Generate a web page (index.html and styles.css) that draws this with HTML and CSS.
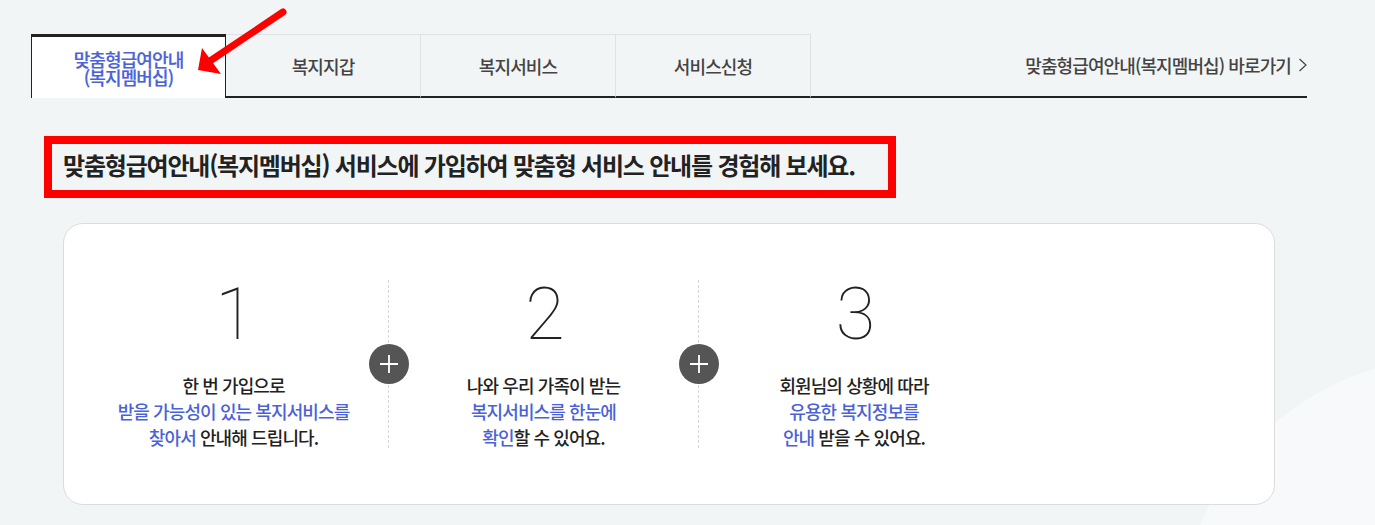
FILE: index.html
```html
<!DOCTYPE html>
<html lang="ko">
<head>
    <meta charset="utf-8">
    <link rel="stylesheet" href="styles.css">
</head>
<body>
    <svg class="red-arrow" width="100" height="80" viewBox="0 0 100 80">
        <path d="M93 12 L20 61" stroke="#f00" stroke-width="7" stroke-linecap="round" fill="none"/>
        <polygon points="8,70 12,48 31,74" fill="#f00"/>
    </svg>
    <div class="tab-bar">
        <a class="tab active">맞춤형급여안내<br>(복지멤버십)</a>
        <a class="tab">복지지갑</a>
        <a class="tab">복지서비스</a>
        <a class="tab">서비스신청</a>
        <a class="shortcut">맞춤형급여안내(복지멤버십) 바로가기
            <svg width="8" height="14" viewBox="0 0 8 14"><path d="M0.5 1 L7 7 L0.5 13" stroke="#444" stroke-width="1.2" fill="none"/></svg>
        </a>
    </div>
    <h2 class="headline">맞춤형급여안내(복지멤버십) 서비스에 가입하여 맞춤형 서비스 안내를 경험해 보세요.</h2>
    <div class="card">
        <div class="step">
            <div class="num">1</div>
            <p>한 번 가입으로<br><span class="blue">받을 가능성이 있는 복지서비스를</span><br><span class="blue">찾아서</span> 안내해 드립니다.</p>
            <div class="plus"><svg width="18" height="18" viewBox="0 0 18 18"><path d="M9 0 V18 M0 9 H18" stroke="#fff" stroke-width="1.8"/></svg></div>
        </div>
        <div class="step">
            <div class="num">2</div>
            <p>나와 우리 가족이 받는<br><span class="blue">복지서비스를 한눈에</span><br><span class="blue">확인</span>할 수 있어요.</p>
            <div class="plus"><svg width="18" height="18" viewBox="0 0 18 18"><path d="M9 0 V18 M0 9 H18" stroke="#fff" stroke-width="1.8"/></svg></div>
        </div>
        <div class="step last">
            <div class="num">3</div>
            <p>회원님의 상황에 따라<br><span class="blue">유용한 복지정보를</span><br><span class="blue">안내</span> 받을 수 있어요.</p>
        </div>
    </div>
</body>
</html>
```

FILE: styles.css
```css
html, body {
    margin: 0;
    height: 525px;
    overflow: hidden;
}
body {
    position: relative;
    background: radial-gradient(circle 279px at 1456px 635px, #f7f9fb 99.7%, #f2f5f6 100%) #f2f5f6;
    font-family: "Noto Sans CJK KR", "Noto Sans", sans-serif;
    color: #222;
    padding: 34px 68px 0 31px;
    box-sizing: border-box;
}
.red-arrow {
    position: absolute;
    left: 190px;
    top: 0;
    z-index: 2;
}
.tab-bar {
    position: relative;
    display: flex;
    height: 64px;
    border-bottom: 2px solid #222;
    box-sizing: border-box;
}
.tab {
    width: 195px;
    height: 64px;
    box-sizing: border-box;
    display: flex;
    align-items: center;
    justify-content: center;
    text-align: center;
    font-size: 18px;
    font-weight: 500;
    line-height: 18px;
    letter-spacing: -0.9px;
    color: #444;
    border: 1px solid #dfe1e4;
    border-left: 0;
    border-bottom: 2px solid #222;
}
.tab.active {
    color: #4a62d8;
    -webkit-text-stroke: 0.2px #4a62d8;
    background-color: #fff;
    border: 1px solid #222;
    border-top: 3px solid #222;
    border-bottom: 0;
}
.shortcut {
    margin-left: auto;
    display: flex;
    align-items: center;
    gap: 8px;
    font-size: 18px;
    font-weight: 500;
    letter-spacing: -0.9px;
    color: #444;
    height: 62px;
}
.headline {
    position: relative;
    width: 852px;
    height: 62px;
    box-sizing: border-box;
    margin: 38px 0 25px 13px;
    border: 8px solid #f00;
    padding-left: 11px;
    font-size: 24px;
    font-weight: 700;
    line-height: 42px;
    letter-spacing: -1.2px;
    color: #222;
    white-space: nowrap;
}
.card {
    position: relative;
    margin-left: 32px;
    width: 1212px;
    height: 282px;
    box-sizing: border-box;
    background-color: #fff;
    border: 1px solid #dcdcdc;
    border-radius: 20px;
    padding: 56px 0 0 15px;
    display: flex;
}
.step {
    position: relative;
    width: 310px;
    height: 168px;
    box-sizing: border-box;
    text-align: center;
    border-right: 1px dashed #d8d8d8;
}
.step.last {
    border-right: 0;
}
.num {
    font-family: "Roboto", sans-serif;
    font-weight: 100;
    font-size: 72px;
    line-height: 70px;
    height: 82px;
    padding-left: 3px;
    color: #222;
}
.step p {
    margin: 10px 0 0;
    font-size: 18px;
    font-weight: 500;
    line-height: 26px;
    letter-spacing: -0.9px;
    color: #222;
}
.blue {
    color: #4a62d8;
}
.plus {
    position: absolute;
    right: -21px;
    top: 64px;
    width: 40px;
    height: 40px;
    border-radius: 50%;
    background-color: #555;
    display: flex;
    align-items: center;
    justify-content: center;
}
```
